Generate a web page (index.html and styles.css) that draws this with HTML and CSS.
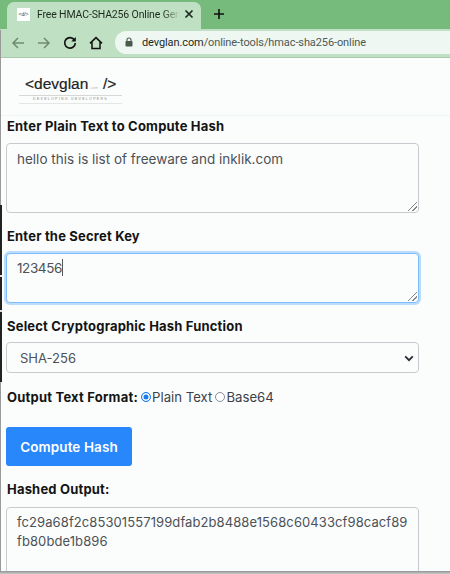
FILE: index.html
```html
<!DOCTYPE html>
<html lang="en">
<head>
<meta charset="utf-8">
<title>Free HMAC-SHA256 Online Generator</title>
<link rel="stylesheet" href="styles.css">
</head>
<body>
<div class="edge"></div>
<div class="edge-dark"></div>
<div class="tabbar">
  <div class="tab">
    <span class="favicon">&lt;d/&gt;</span>
    <span class="tab-title">Free HMAC-SHA256 Online Gene</span>
    <svg class="tab-close" width="10" height="10" viewBox="0 0 10 10"><path d="M1.5 1.5l7 7M8.5 1.5l-7 7" stroke="#1d2a1f" stroke-width="1.7" fill="none"/></svg>
  </div>
  <svg class="newtab" width="12" height="12" viewBox="0 0 12 12"><path d="M6 1v10M1 6h10" stroke="#111" stroke-width="1.6" fill="none"/></svg>
</div>
<div class="toolbar">
  <svg class="nav" width="14" height="14" viewBox="0 0 14 14"><path d="M13 7H2M7 2L2 7l5 5" stroke="#6f8a73" stroke-width="1.5" fill="none"/></svg>
  <svg class="nav" width="14" height="14" viewBox="0 0 14 14"><path d="M1 7h11M7 2l5 5-5 5" stroke="#6f8a73" stroke-width="1.5" fill="none"/></svg>
  <svg class="nav" width="14" height="14" viewBox="0 0 14 14"><path d="M11.6 4.2A5.3 5.3 0 1 0 12.3 7" stroke="#111" stroke-width="1.7" fill="none"/><path d="M12.8 1v4.6H8.2z" fill="#111"/></svg>
  <svg class="nav" width="14" height="14" viewBox="0 0 14 14"><path d="M1 7.4L7 1.6l6 5.8M3 6.2V12.5h8V6.2" stroke="#111" stroke-width="1.5" fill="none"/></svg>
  <div class="omnibox">
    <svg width="8" height="10" viewBox="0 0 8 10"><path d="M2 4.5V3a2 2 0 0 1 4 0v1.500" stroke="#4a5a4d" stroke-width="1.100" fill="none"/><rect x="0.500" y="4" width="7" height="5.500" rx="0.800" fill="#4a5a4d"/></svg>
    <span class="url">devglan.com<span class="url-path">/online-tools/hmac-sha256-online</span></span>
  </div>
</div>
<header class="site-header">
  <div class="logo">
    <div class="logo-main">&lt;<span class="logo-name">devglan</span><span class="logo-com">.com</span><span class="logo-end">/&gt;</span></div>
    <div class="logo-tag">DEVELOPING DEVELOPERS</div>
  </div>
</header>
<main class="form">
  <label class="label">Enter Plain Text to Compute Hash</label>
  <div class="field field-plain"><span class="value">hello this is list of freeware and inklik.com</span><span class="grip"></span></div>
  <label class="label label-key">Enter the Secret Key</label>
  <div class="field field-key"><span class="value value-key">123456<span class="caret"></span></span><span class="grip"></span></div>
  <label class="label label-select">Select Cryptographic Hash Function</label>
  <div class="select"><span class="select-value">SHA-256</span>
    <svg width="10" height="7" viewBox="0 0 10 7"><path d="M1.200 1.400L5 5.200l3.800-3.800" stroke="#2b2f33" stroke-width="1.900" fill="none"/></svg>
  </div>
  <div class="format">
    <span class="format-label">Output Text Format:</span>
    <span class="radio radio-on"></span><span class="radio-text">Plain Text</span>
    <span class="radio"></span><span class="radio-text">Base64</span>
  </div>
  <button class="compute" type="button">Compute Hash</button>
  <label class="label label-out">Hashed Output:</label>
  <div class="field field-out"><span class="value value-out">fc29a68f2c85301557199dfab2b8488e1568c60433cf98cacf89<br>fb80bde1b896</span></div>
</main>
<div class="bottom-edge"></div>
</body>
</html>
```
FILE: styles.css
```css
* { box-sizing: border-box; }
html, body { margin: 0; padding: 0; }
body {
  width: 450px;
  height: 574px;
  overflow: hidden;
  position: relative;
  background: #fbfdfd;
  font-family: Inter, "Open Sans", "Liberation Sans", sans-serif;
  color: #111;
}
.edge {
  position: absolute;
  left: 0;
  top: 30px;
  width: 1px;
  height: 542px;
  background: #9a9a9a;
}
.edge-dark {
  position: absolute;
  left: 0;
  top: 205px;
  width: 2px;
  height: 177px;
  background: linear-gradient(#222 0 70px, #ddd 70px 72px, #222 72px 105px, #ddd 105px 107px, #222 107px);
}
.bottom-edge {
  position: absolute;
  left: 0;
  right: 0;
  bottom: 0;
  height: 3px;
  background: linear-gradient(#8f9392, #c9cccb);
}
.tabbar {
  height: 29px;
  background: #77bb7c;
  display: flex;
  align-items: flex-end;
  padding-left: 7px;
}
.tab {
  width: 194px;
  height: 27px;
  background: #c0e0c3;
  border-radius: 7px 7px 0 0;
  display: flex;
  align-items: center;
  padding: 0 8px 3px 10px;
}
.favicon {
  width: 13px;
  height: 13px;
  background: #fff;
  color: #333;
  font-size: 5px;
  line-height: 13px;
  text-align: center;
  font-family: "Liberation Sans", sans-serif;
  flex: none;
}
.tab-title {
  margin-left: 7px;
  font-family: Roboto, sans-serif;
  font-size: 10.500px;
  letter-spacing: -0.150px;
  color: #1d2a1f;
  white-space: nowrap;
  width: 143px;
  flex: none;
  -webkit-mask-image: linear-gradient(90deg, #000 88%, transparent 100%);
  mask-image: linear-gradient(90deg, #000 88%, transparent 100%);
}
.tab-close { margin-left: 4px; flex: none; }
.newtab { margin: 0 0 9px 12px; }
.toolbar {
  height: 29px;
  background: #c0e0c3;
  display: flex;
  align-items: center;
  padding: 0 0 0 11px;
  gap: 12px;
  border-bottom: 1px solid #a9cbad;
}
.omnibox {
  flex: 1;
  height: 23px;
  margin-top: -2px;
  background: #eff7f2;
  border-radius: 12px 0 0 12px;
  display: flex;
  align-items: center;
  gap: 9px;
  padding-left: 10px;
}
.url {
  font-family: Roboto, sans-serif;
  font-size: 11px;
  letter-spacing: -0.100px;
  color: #1d2a1f;
  white-space: nowrap;
}
.url-path { color: #4e5a52; }
.site-header {
  height: 58px;
  border-bottom: 1px solid #edf5f5;
  padding: 18px 0 0 19px;
}
.logo { width: 103px; color: #222; }
.logo-main {
  display: flex;
  align-items: baseline;
  height: 15px;
  font-family: "Liberation Sans", sans-serif;
  font-size: 15.500px;
  line-height: 15px;
  padding-left: 6px;
  -webkit-text-stroke: 0.200px #222;
}
.logo-com { font-size: 4px; color: #bbb; margin-left: 1px; -webkit-text-stroke: 0; }
.logo-end { margin-left: 5px; }
.logo-tag {
  margin-top: 4px;
  border-top: 1px solid #d5d8d6;
  border-bottom: 1px solid #e4e6e5;
  font-family: "Liberation Sans", sans-serif;
  font-size: 3.500px;
  line-height: 7px;
  letter-spacing: 1.300px;
  text-align: center;
  color: #888;
  white-space: nowrap;
}
.form { padding: 1px 0 0 6px; }
.label {
  display: block;
  padding-left: 1px;
  font-size: 13px;
  line-height: 18px;
  font-weight: 700;
  letter-spacing: 0.190px;
  color: #141414;
  white-space: nowrap;
}
.field {
  position: relative;
  width: 413px;
  background: #fbfdfd;
  border: 1px solid #c6cbd0;
  border-radius: 4px;
  padding: 5px 10px;
  font-size: 13.500px;
  line-height: 21px;
  color: #4b5157;
  margin-top: 8px;
}
.field-plain { height: 70px; }
.field-key {
  height: 50px;
  padding-top: 4px;
  border-color: #7fbcfb;
  box-shadow: 0 0 0 2px #bcdcfb;
}
.value { white-space: nowrap; }
.value-key { letter-spacing: -0.400px; }
.caret {
  display: inline-block;
  width: 1px;
  height: 17px;
  background: #555;
  vertical-align: -3px;
}
.grip {
  position: absolute;
  right: 1px;
  bottom: 1px;
  width: 9px;
  height: 9px;
  background: linear-gradient(135deg, transparent 45%, #888 45%, #888 55%, transparent 55%, transparent 70%, #888 70%, #888 80%, transparent 80%);
}
.label-key { margin-top: 14px; }
.label-select { margin-top: 14px; }
.select {
  width: 413px;
  height: 31px;
  margin-top: 7px;
  border: 1px solid #c6cbd0;
  border-radius: 4px;
  display: flex;
  align-items: center;
  justify-content: space-between;
  padding: 1px 4px 0 13px;
  font-size: 13px;
  color: #4b5157;
}
.format {
  display: flex;
  align-items: center;
  height: 18px;
  margin-top: 15px;
  font-size: 13.200px;
  white-space: nowrap;
}
.format-label { padding-left: 1px; font-weight: 700; font-size: 13px; letter-spacing: 0.220px; color: #141414; margin-right: 3px; }
.radio {
  width: 10px;
  height: 10px;
  border-radius: 50%;
  border: 1px solid #8a8f94;
  background: #fff;
  flex: none;
}
.radio-on {
  border: 1px solid #1a7cf0;
  background: #1a7cf0;
  box-shadow: inset 0 0 0 1.500px #fff;
}
.radio-text { color: #3c4147; margin-left: 1px; margin-right: 3px; }
.compute {
  display: block;
  width: 126px;
  height: 39px;
  margin-top: 21px;
  border: 0;
  border-radius: 3px;
  background: #2787fb;
  color: #fff;
  font-family: inherit;
  font-size: 13.500px;
  font-weight: 600;
  letter-spacing: 0.100px;
}
.label-out { margin-top: 14px; }
.field-out {
  height: 70px;
  margin-top: 9px;
  font-size: 13px;
  line-height: 19px;
  letter-spacing: 0.090px;
  padding-top: 5px;
}
```
